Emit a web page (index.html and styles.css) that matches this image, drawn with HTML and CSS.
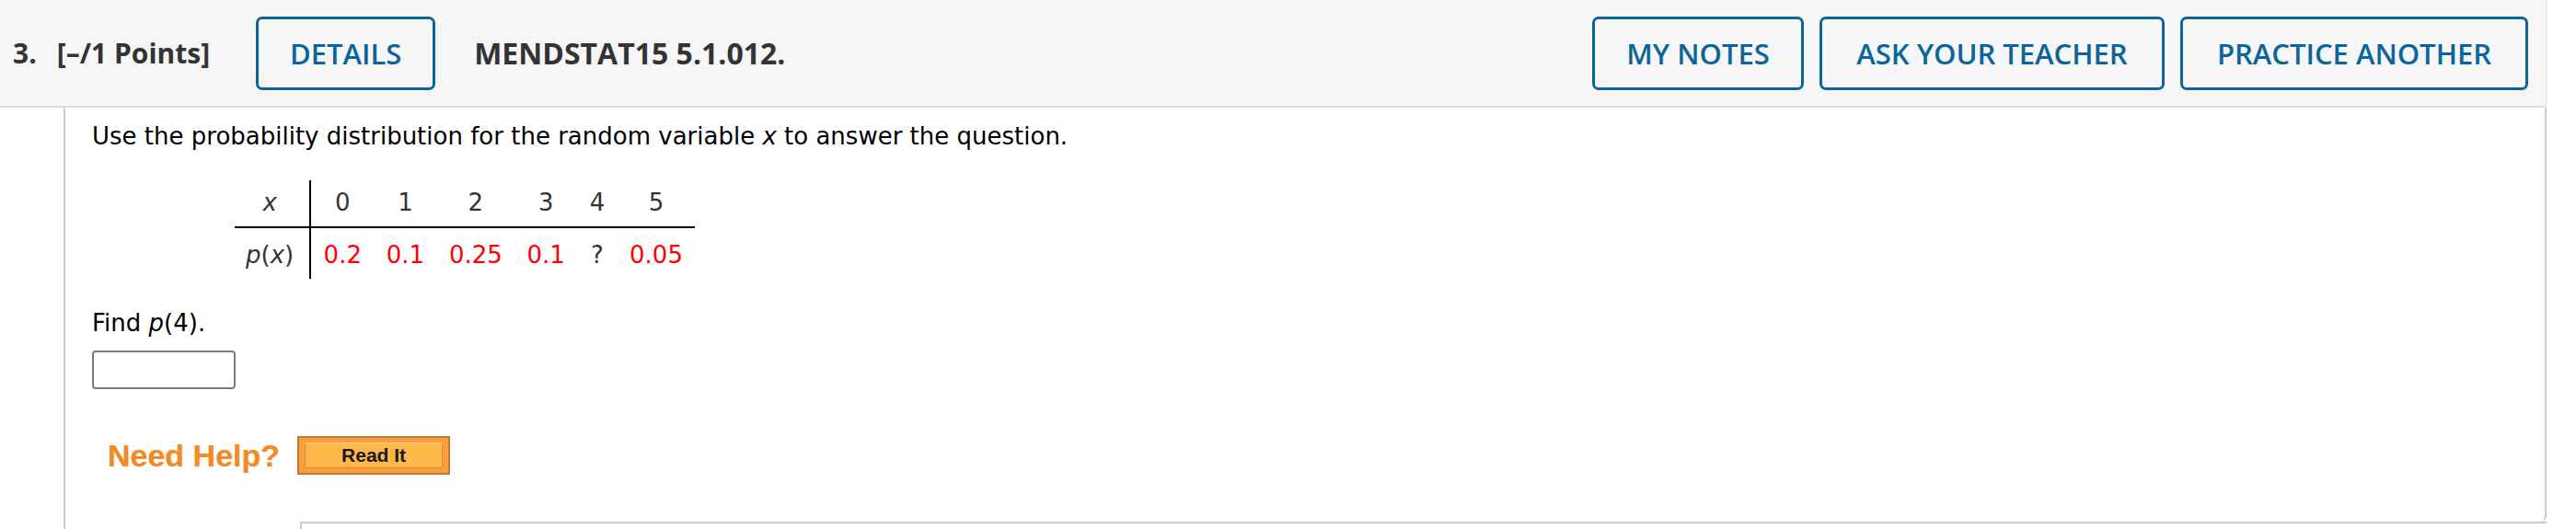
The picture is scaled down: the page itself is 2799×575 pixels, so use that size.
FILE: index.html
```html
<!DOCTYPE html>
<html>
<head>
<meta charset="utf-8">
<link rel="stylesheet" href="styles.css">
</head>
<body>
<div class="question">
  <div class="qhead">
    <span class="qnum">3.</span>
    <span class="qpts">[–/1 Points]</span>
    <button class="hbtn btn-details">DETAILS</button>
    <span class="qid">MENDSTAT15 5.1.012.</span>
    <div class="hright">
      <button class="hbtn btn-notes">MY NOTES</button>
      <button class="hbtn btn-ask">ASK YOUR TEACHER</button>
      <button class="hbtn btn-practice">PRACTICE ANOTHER</button>
    </div>
  </div>
  <div class="qbody">
    <div class="panel">
      <p class="prompt">Use the probability distribution for the random variable <i>x</i> to answer the question.</p>
      <table class="dist">
        <tr class="xrow">
          <td class="lab"><i>x</i></td>
          <td>0</td><td>1</td><td>2</td><td>3</td><td>4</td><td>5</td>
        </tr>
        <tr class="prow">
          <td class="lab"><i>p</i>(<i>x</i>)</td>
          <td class="val">0.2</td><td class="val">0.1</td><td class="val">0.25</td><td class="val">0.1</td><td>?</td><td class="val">0.05</td>
        </tr>
      </table>
      <p class="find">Find <i>p</i>(4).</p>
      <input class="answer" type="text">
      <div class="help">
        <span class="need">Need Help?</span>
        <span class="readit"><span class="readit-inner">Read It</span></span>
      </div>
    </div>
    <div class="next"></div>
  </div>
</div>
</body>
</html>
```

FILE: styles.css
```css
html, body {
  margin: 0;
  padding: 0;
  background: #ffffff;
}

body {
  font-family: "DejaVu Sans", Verdana, sans-serif;
  color: #000;
}

.question {
  width: 2767px;
}

.qhead {
  display: flex;
  align-items: center;
  height: 115px;
  background: #f6f6f6;
  border-bottom: 2px solid #dddddd;
  border-right: 1px solid #dddddd;
  border-bottom-right-radius: 4px;
  padding-left: 14px;
  font-family: "Open Sans", sans-serif;
  font-size: 30px;
  color: #333333;
}

.qnum {
  font-weight: 700;
  margin-right: 22px;
}

.qpts {
  font-weight: 700;
  margin-right: 50px;
}

.qid {
  font-weight: 700;
  font-size: 32px;
  margin-left: 42px;
}

.hbtn {
  box-sizing: border-box;
  height: 80px;
  padding: 0;
  border: 3px solid #0b659c;
  border-radius: 7px;
  background: transparent;
  color: #0b659c;
  font-family: "Open Sans", sans-serif;
  font-weight: 600;
  font-size: 31px;
  text-align: center;
  white-space: nowrap;
}

.btn-details { width: 195px; }
.btn-notes { width: 230px; }
.btn-ask { width: 375px; }
.btn-practice { width: 378px; }

.hright {
  margin-left: auto;
  margin-right: 19px;
  display: flex;
  gap: 17px;
}

.qbody {
  margin-left: 69px;
  border-left: 2px solid #cccccc;
}

.panel {
  border-right: 2px solid #cccccc;
  border-bottom-right-radius: 6px;
  padding: 17px 0 51px 29px;
}

.prompt, .find {
  margin: 0;
  font-size: 26px;
  line-height: 28px;
}

.dist {
  border-collapse: collapse;
  margin: 34px 0 0 155px;
  font-size: 26px;
  line-height: 28px;
  color: #333333;
}

.dist td {
  padding: 10px 13.4px 12px;
  text-align: center;
}

.dist .xrow td {
  border-bottom: 2px solid #000;
}

.dist .prow td {
  padding-top: 15px;
}

.dist td.lab {
  border-right: 2px solid #000;
  padding: 0 17px 0 12px;
}

.dist .xrow td.lab {
  padding-top: 10px;
  padding-bottom: 12px;
}

.dist .prow td.lab {
  padding-top: 15px;
  padding-bottom: 12px;
}

.dist td.val {
  color: #ff0000;
}

.find {
  margin-top: 34px;
}

.answer {
  display: block;
  box-sizing: border-box;
  width: 156px;
  height: 42px;
  margin-top: 16px;
  border: 2px solid #7a7a7a;
  border-radius: 4px;
  background: #fff;
}

.help {
  display: flex;
  align-items: center;
  margin-top: 51px;
  margin-left: 17px;
  gap: 19px;
}

.need {
  font-family: "Liberation Sans", Arial, sans-serif;
  font-weight: 700;
  font-size: 34px;
  color: #f28a26;
  text-shadow: 0 0 1px rgba(242, 138, 38, 0.5);
}

.readit {
  box-sizing: border-box;
  display: flex;
  width: 166px;
  height: 42px;
  padding: 5px 6px;
  border: 2px solid #c27833;
  background: #f8a13c;
}

.readit-inner {
  flex: 1;
  display: flex;
  align-items: center;
  justify-content: center;
  border: 1px solid #d98b3b;
  border-top-color: #fcd08a;
  background: #feb84b;
  font-family: "Liberation Sans", Arial, sans-serif;
  font-weight: 700;
  font-size: 21px;
  color: #1a1a1a;
}

.next {
  margin-left: 255px;
  height: 20px;
  border-top: 2px solid #cccccc;
  border-left: 2px solid #cccccc;
}
```
